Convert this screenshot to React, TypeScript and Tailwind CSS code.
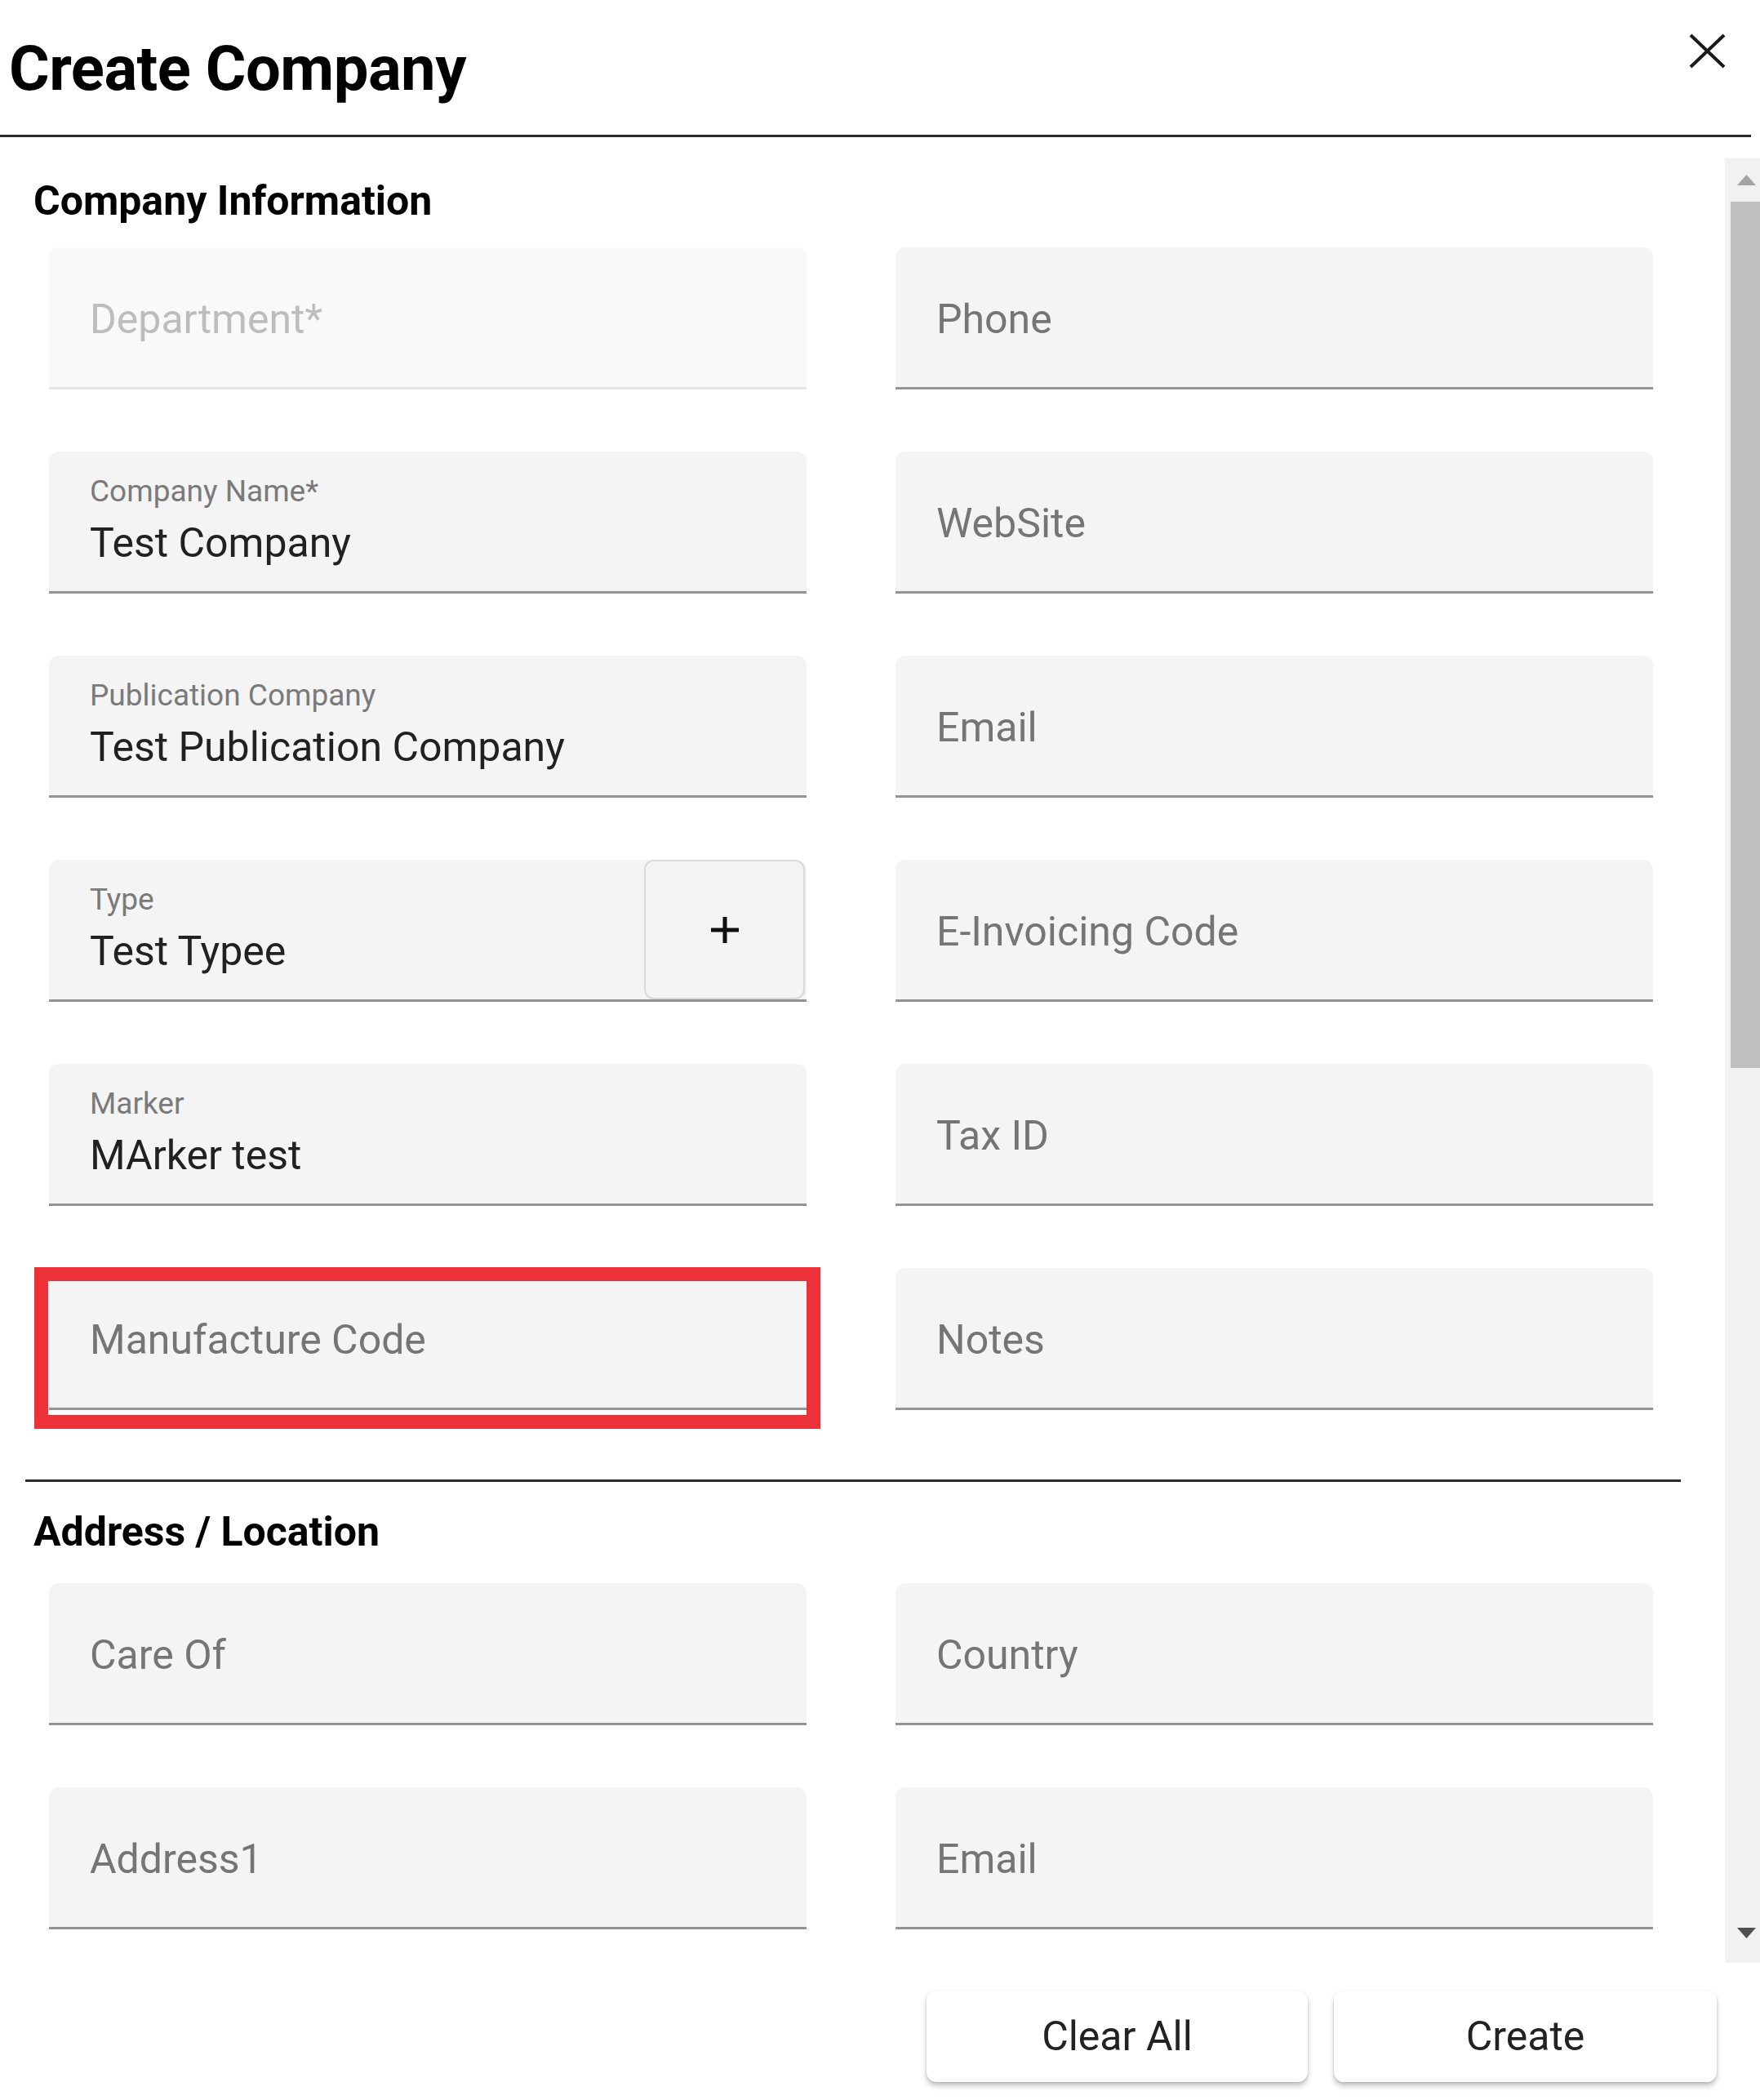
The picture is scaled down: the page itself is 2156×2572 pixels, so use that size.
import React from 'react';

type FieldDef = {
  label: string;
  value?: string;
  disabled?: boolean;
  highlight?: boolean;
  addon?: boolean;
};

const companyFields: FieldDef[] = [
  { label: 'Department*', disabled: true },
  { label: 'Phone' },
  { label: 'Company Name*', value: 'Test Company' },
  { label: 'WebSite' },
  { label: 'Publication Company', value: 'Test Publication Company' },
  { label: 'Email' },
  { label: 'Type', value: 'Test Typee', addon: true },
  { label: 'E-Invoicing Code' },
  { label: 'Marker', value: 'MArker test' },
  { label: 'Tax ID' },
  { label: 'Manufacture Code', highlight: true },
  { label: 'Notes' },
];

const addressFields: FieldDef[] = [
  { label: 'Care Of' },
  { label: 'Country' },
  { label: 'Address1' },
  { label: 'Email' },
];

const Field: React.FC<{ field: FieldDef }> = ({ field }) => {
  const { label, value, disabled, highlight, addon } = field;
  return (
    <div className="relative">
      <div
        className={`flex h-[174px] rounded-t-[12px] border-b-[3px] ${
          disabled ? 'bg-[#f9f9f9] border-[#e4e4e4]' : 'bg-[#f4f4f4] border-[#949494]'
        }`}
      >
        <div className="flex-1 pl-[50px]">
          {value ? (
            <div className="flex flex-col pt-[27px]">
              <span className="text-[37px] leading-[44px] text-[#7a7a7a]">{label}</span>
              <span className="mt-[11px] text-[50px] leading-[60px] text-[#212121]">{value}</span>
            </div>
          ) : (
            <div className="flex h-full items-center pt-[4px]">
              <span
                className={`text-[50px] leading-[60px] ${disabled ? 'text-[#bdbdbd]' : 'text-[#757575]'}`}
              >
                {label}
              </span>
            </div>
          )}
        </div>
        {addon && (
          <button className="mr-[2px] flex w-[197px] items-center justify-center rounded-[12px] border-2 border-[#dadada] bg-[#f4f4f4]">
            <svg width="34" height="32" viewBox="0 0 34 32">
              <line x1="0" y1="16" x2="34" y2="16" stroke="#111" strokeWidth="5" />
              <line x1="17" y1="0" x2="17" y2="32" stroke="#111" strokeWidth="5" />
            </svg>
          </button>
        )}
      </div>
      {highlight && (
        <div className="pointer-events-none absolute -top-[1px] -bottom-[23px] -left-[18px] -right-[17px] border-[17px] border-[#ec3138]" />
      )}
    </div>
  );
};

const FieldGrid: React.FC<{ fields: FieldDef[] }> = ({ fields }) => (
  <div className="grid grid-cols-[928px_928px] gap-x-[109px] gap-y-[76px] pl-[60px]">
    {fields.map((f, i) => (
      <Field key={i} field={f} />
    ))}
  </div>
);

const Scrollbar: React.FC = () => (
  <div className="flex w-[43px] flex-col bg-[#f1f1f1]">
    <div className="flex h-[53px] items-center justify-center pl-[10px]">
      <svg width="23" height="13" viewBox="0 0 23 13">
        <polygon points="11.5,0 23,13 0,13" fill="#a3a3a3" />
      </svg>
    </div>
    <div className="ml-[7px] h-[1061px] bg-[#c1c1c1]" />
    <div className="flex-1" />
    <div className="flex h-[60px] items-start justify-center pl-[10px] pt-[17px]">
      <svg width="23" height="13" viewBox="0 0 23 13">
        <polygon points="0,0 23,0 11.5,13" fill="#505050" />
      </svg>
    </div>
  </div>
);

export default function App() {
  return (
    <div className="h-[2572px] w-[2156px] overflow-hidden bg-white font-['Roboto',sans-serif] text-black">
      {/* header */}
      <div className="flex h-[165px] items-start justify-between">
        <h1 className="pl-[11px] pt-[37px] text-[76px] font-bold leading-[94px] tracking-[-0.5px]">
          Create Company
        </h1>
        <button className="mr-[42px] mt-[41px]">
          <svg width="45" height="43" viewBox="0 0 45 43">
            <line x1="2" y1="2" x2="43" y2="41" stroke="#1a1a1a" strokeWidth="4" />
            <line x1="43" y1="2" x2="2" y2="41" stroke="#1a1a1a" strokeWidth="4" />
          </svg>
        </button>
      </div>
      <div className="h-[3px] w-[2145px] bg-[#2b2b2b]" />

      {/* body */}
      <div className="mt-[26px] flex h-[2210px]">
        <div className="flex-1 overflow-hidden">
          <h2 className="pl-[41px] pt-[22px] text-[50px] font-bold leading-[60px]">Company Information</h2>
          <div className="mt-[27px]">
            <FieldGrid fields={companyFields} />
          </div>
          <div className="ml-[31px] mt-[85px] h-[3px] w-[2028px] bg-[#2b2b2b]" />
          <h2 className="mt-[31px] pl-[41px] text-[50px] font-bold leading-[60px]">Address / Location</h2>
          <div className="mt-[33px]">
            <FieldGrid fields={addressFields} />
          </div>
        </div>
        <Scrollbar />
      </div>

      {/* footer */}
      <div className="flex justify-end gap-[32px] pr-[53px] pt-[34px]">
        <button className="h-[112px] w-[467px] rounded-[12px] bg-white text-[50px] text-[#222] shadow-[0_5px_6px_rgba(0,0,0,0.22),0_1px_3px_rgba(0,0,0,0.12)]">
          Clear All
        </button>
        <button className="h-[112px] w-[469px] rounded-[12px] bg-white text-[50px] text-[#222] shadow-[0_5px_6px_rgba(0,0,0,0.22),0_1px_3px_rgba(0,0,0,0.12)]">
          Create
        </button>
      </div>
    </div>
  );
}
